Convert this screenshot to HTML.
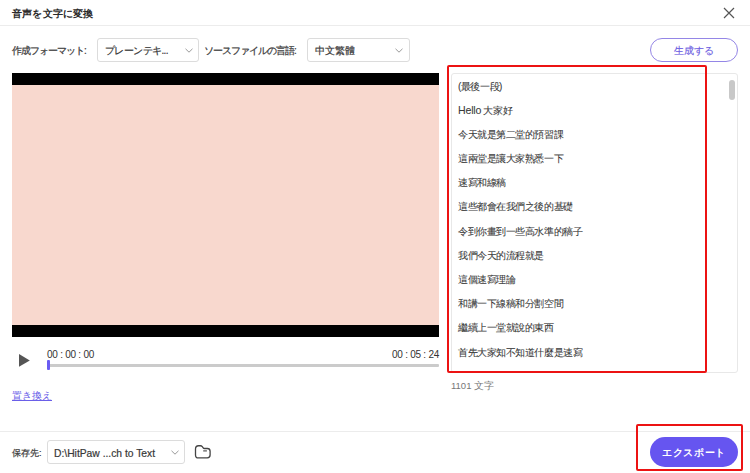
<!DOCTYPE html>
<html><head><meta charset="utf-8">
<style>
*{margin:0;padding:0;box-sizing:border-box}
html,body{width:750px;height:473px;overflow:hidden;background:#fff;font-family:"Liberation Sans",sans-serif;color:#333}
.abs{position:absolute;white-space:nowrap}
.title{left:12px;top:6px;letter-spacing:0.2px;font-size:10px;font-weight:bold;color:#2a2a2a;line-height:16px}
.sep{left:0;width:750px;height:1px;background:#ececec}
.lbl{font-size:10px;color:#3c3c3c;-webkit-text-stroke:0.22px #3c3c3c;line-height:14px}
.dd{border:1px solid #dcdcdc;border-radius:3px;background:#fff;font-size:10px;color:#333;line-height:14px}
.dd span{position:absolute;left:7px;top:4px;color:#383838;-webkit-text-stroke:0.2px #383838}
.dd svg{position:absolute;top:9px}
.btn{border:1.3px solid #9486e6;border-radius:12px;color:#6f5fe2;-webkit-text-stroke:0.15px #6f5fe2;font-size:10px;text-align:center;line-height:23px}
.video{left:12px;top:73px;width:427px;height:264px;background:#000}
.pink{left:0;top:12px;width:427px;height:240px;background:#f8d8ce}
.panel{left:451px;top:73px;width:287px;height:300px;border:1px solid #e8e8e8;border-radius:3px}
.line{left:458px;font-size:10px;letter-spacing:-0.45px;color:#3a3a3a;-webkit-text-stroke:0.08px #3a3a3a;line-height:14px}
.red{border:2px solid #ec1313;border-radius:2px}
</style></head><body>
<div class="abs title">音声を文字に変換</div>
<svg class="abs" style="left:723px;top:7px" width="12" height="12" viewBox="0 0 12 12"><path d="M1 1L11 11M11 1L1 11" stroke="#555" stroke-width="1.2" fill="none"/></svg>
<div class="abs sep" style="top:25px"></div>

<div class="abs lbl" style="left:12px;top:44px;letter-spacing:-1px">作成フォーマット:</div>
<div class="abs dd" style="left:97px;top:38px;width:102px;height:24px"><span style="left:7px;top:5px;letter-spacing:-0.6px">プレーンテキ...</span><svg style="left:87px" width="8" height="5" viewBox="0 0 8 5"><path d="M0.5 0.8L4 4.2L7.5 0.8" stroke="#999" stroke-width="1" fill="none"/></svg></div>
<div class="abs lbl" style="left:204px;top:44px;letter-spacing:-1px">ソースファイルの言語:</div>
<div class="abs dd" style="left:307px;top:38px;width:103px;height:24px"><span style="top:5px">中文繁體</span><svg style="left:87px" width="8" height="5" viewBox="0 0 8 5"><path d="M0.5 0.8L4 4.2L7.5 0.8" stroke="#999" stroke-width="1" fill="none"/></svg></div>
<div class="abs btn" style="left:650px;top:38px;width:88px;height:23.5px">生成する</div>

<div class="abs video"><div class="abs pink"></div></div>

<svg class="abs" style="left:19px;top:354px" width="12" height="13" viewBox="0 0 12 13"><path d="M0 0L10.8 6.4L0 12.8Z" fill="#555"/></svg>
<div class="abs" style="left:47px;top:349px;font-size:10px;letter-spacing:-0.25px;color:#333;line-height:11px">00 : 00 : 00</div>
<div class="abs" style="left:392px;top:349px;font-size:10px;letter-spacing:-0.25px;color:#333;line-height:11px">00 : 05 : 24</div>
<div class="abs" style="left:47px;top:364px;width:392px;height:3px;background:#cbcbcb;border-radius:1px"></div>
<div class="abs" style="left:47px;top:360px;width:3px;height:10px;background:#6a5cf2;border-radius:1px"></div>

<div class="abs" style="left:12px;top:389px;font-size:9.5px;color:#6a5ee8;text-decoration:underline;line-height:13px">置き換え</div>

<div class="abs sep" style="top:431px"></div>
<div class="abs lbl" style="left:12px;top:446px;font-size:9px">保存先:</div>
<div class="abs dd" style="left:47px;top:440px;width:138px;height:24px"><span style="left:6px;top:6px;font-size:10.3px">D:\HitPaw ...ch to Text</span><svg style="left:123px" width="8" height="5" viewBox="0 0 8 5"><path d="M0.5 0.8L4 4.2L7.5 0.8" stroke="#999" stroke-width="1" fill="none"/></svg></div>
<svg class="abs" style="left:194px;top:444px" width="18" height="16" viewBox="0 0 18 16"><path d="M1.5 5Q1.5 1.75 4.5 1.75H6.5Q7.5 1.75 8.3 2.6L9 3.6Q9.6 4.5 10.5 4.5H13.3Q16.1 4.5 16.1 7.2V11.1Q16.1 13.85 13.3 13.85H4.3Q1.5 13.85 1.5 11.1Z" stroke="#444" stroke-width="1.3" fill="none"/><path d="M9.2 6.9H12.9" stroke="#444" stroke-width="1.1"/></svg>

<div class="abs panel"></div>
<div class="abs" style="left:729px;top:80px;width:5.5px;height:20px;background:#c8c8c8;border-radius:3px"></div>
<div class="abs red" style="left:447px;top:65px;width:260px;height:308px"></div>
<div class="abs line" style="top:80px">(最後一段)</div>
<div class="abs line" style="top:103px"><span style="font-size:10.6px;letter-spacing:-0.2px">Hello</span> 大家好</div>
<div class="abs line" style="top:128px">今天就是第二堂的預習課</div>
<div class="abs line" style="top:152px">這兩堂是讓大家熟悉一下</div>
<div class="abs line" style="top:176px">速寫和線稿</div>
<div class="abs line" style="top:200px">這些都會在我們之後的基礎</div>
<div class="abs line" style="top:225px">令到你畫到一些高水準的稿子</div>
<div class="abs line" style="top:249px">我們今天的流程就是</div>
<div class="abs line" style="top:273px">這個速寫理論</div>
<div class="abs line" style="top:297px">和講一下線稿和分割空間</div>
<div class="abs line" style="top:321px">繼續上一堂就說的東西</div>
<div class="abs line" style="top:346px">首先大家知不知道什麼是速寫</div>
<div class="abs" style="left:451px;top:379px;font-size:9.5px;color:#777;line-height:13px">1101 文字</div>

<div class="abs red" style="left:636px;top:424px;width:107px;height:47px"></div>
<div class="abs" style="left:650px;top:437px;width:88px;height:30px;background:#6655f0;border-radius:15px;color:#fff;font-weight:bold;font-size:10px;letter-spacing:0.6px;text-align:center;line-height:31px">エクスポート</div>
</body></html>
